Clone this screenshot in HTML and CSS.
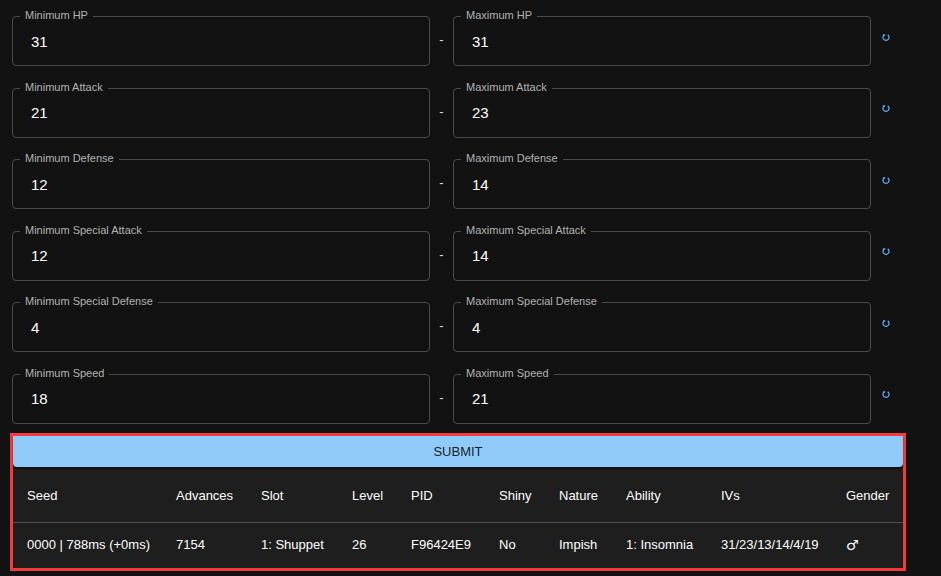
FILE: index.html
```html
<!DOCTYPE html>
<html>
<head>
<meta charset="utf-8">
<link rel="stylesheet" href="styles.css">
</head>
<body>
<div class="page">
  <div class="rows">
    <div class="row">
      <div class="field"><span class="label">Minimum HP</span><span class="value">31</span></div>
      <div class="dash">-</div>
      <div class="field"><span class="label">Maximum HP</span><span class="value">31</span></div>
      <div class="reset"><svg viewBox="0 0 8 8" width="8" height="8"><path d="M5.7 1.9 A3 3 0 1 1 2.3 1.9" fill="none" stroke="#5ea6e8" stroke-width="1.3"/><path d="M0.9 0.9 L3.7 1.4 L2.2 3.3 Z" fill="#5ea6e8"/></svg></div>
    </div>
    <div class="row">
      <div class="field"><span class="label">Minimum Attack</span><span class="value">21</span></div>
      <div class="dash">-</div>
      <div class="field"><span class="label">Maximum Attack</span><span class="value">23</span></div>
      <div class="reset"><svg viewBox="0 0 8 8" width="8" height="8"><path d="M5.7 1.9 A3 3 0 1 1 2.3 1.9" fill="none" stroke="#5ea6e8" stroke-width="1.3"/><path d="M0.9 0.9 L3.7 1.4 L2.2 3.3 Z" fill="#5ea6e8"/></svg></div>
    </div>
    <div class="row">
      <div class="field"><span class="label">Minimum Defense</span><span class="value">12</span></div>
      <div class="dash">-</div>
      <div class="field"><span class="label">Maximum Defense</span><span class="value">14</span></div>
      <div class="reset"><svg viewBox="0 0 8 8" width="8" height="8"><path d="M5.7 1.9 A3 3 0 1 1 2.3 1.9" fill="none" stroke="#5ea6e8" stroke-width="1.3"/><path d="M0.9 0.9 L3.7 1.4 L2.2 3.3 Z" fill="#5ea6e8"/></svg></div>
    </div>
    <div class="row">
      <div class="field"><span class="label">Minimum Special Attack</span><span class="value">12</span></div>
      <div class="dash">-</div>
      <div class="field"><span class="label">Maximum Special Attack</span><span class="value">14</span></div>
      <div class="reset"><svg viewBox="0 0 8 8" width="8" height="8"><path d="M5.7 1.9 A3 3 0 1 1 2.3 1.9" fill="none" stroke="#5ea6e8" stroke-width="1.3"/><path d="M0.9 0.9 L3.7 1.4 L2.2 3.3 Z" fill="#5ea6e8"/></svg></div>
    </div>
    <div class="row">
      <div class="field"><span class="label">Minimum Special Defense</span><span class="value">4</span></div>
      <div class="dash">-</div>
      <div class="field"><span class="label">Maximum Special Defense</span><span class="value">4</span></div>
      <div class="reset"><svg viewBox="0 0 8 8" width="8" height="8"><path d="M5.7 1.9 A3 3 0 1 1 2.3 1.9" fill="none" stroke="#5ea6e8" stroke-width="1.3"/><path d="M0.9 0.9 L3.7 1.4 L2.2 3.3 Z" fill="#5ea6e8"/></svg></div>
    </div>
    <div class="row">
      <div class="field"><span class="label">Minimum Speed</span><span class="value">18</span></div>
      <div class="dash">-</div>
      <div class="field"><span class="label">Maximum Speed</span><span class="value">21</span></div>
      <div class="reset"><svg viewBox="0 0 8 8" width="8" height="8"><path d="M5.7 1.9 A3 3 0 1 1 2.3 1.9" fill="none" stroke="#5ea6e8" stroke-width="1.3"/><path d="M0.9 0.9 L3.7 1.4 L2.2 3.3 Z" fill="#5ea6e8"/></svg></div>
    </div>
  </div>

  <div class="frame">
    <button class="submit">SUBMIT</button>
    <table class="results">
      <colgroup>
        <col style="width:149px"><col style="width:85px"><col style="width:91px"><col style="width:59px"><col style="width:88px">
        <col style="width:60px"><col style="width:67px"><col style="width:95px"><col style="width:125px"><col style="width:71px">
      </colgroup>
      <thead>
        <tr><th>Seed</th><th>Advances</th><th>Slot</th><th>Level</th><th>PID</th><th>Shiny</th><th>Nature</th><th>Ability</th><th>IVs</th><th>Gender</th></tr>
      </thead>
      <tbody>
        <tr><td>0000 | 788ms (+0ms)</td><td>7154</td><td>1: Shuppet</td><td>26</td><td>F96424E9</td><td>No</td><td>Impish</td><td>1: Insomnia</td><td>31/23/13/14/4/19</td><td class="gender">♂</td></tr>
      </tbody>
    </table>
  </div>
</div>
</body>
</html>
```

FILE: styles.css
```css
html, body {
  margin: 0;
  padding: 0;
  background: #121212;
  overflow: hidden;
}
body {
  font-family: "Liberation Sans", Arial, sans-serif;
  color: #fff;
}
.page {
  padding: 16px 0 0 10px;
}
.rows {
  display: flex;
  flex-direction: column;
  gap: 21.6px;
  padding-left: 2px;
}
.row {
  display: flex;
  align-items: center;
}
.field {
  position: relative;
  box-sizing: border-box;
  flex: 0 0 418px;
  width: 418px;
  height: 50px;
  border: 1px solid #4b4b4b;
  border-radius: 4px;
  display: flex;
  align-items: center;
  padding-left: 18px;
}
.label {
  position: absolute;
  left: 7px;
  top: -9px;
  padding: 0 5px;
  background: #121212;
  font-size: 11px;
  line-height: 14px;
  color: #b3b3b3;
}
.value {
  font-size: 15px;
  color: #fff;
}
.dash {
  flex: 0 0 23px;
  text-align: center;
  font-size: 13px;
  color: #ddd;
  padding-bottom: 3px;
}
.reset {
  flex: 0 0 8px;
  height: 8px;
  margin-left: 11px;
  margin-bottom: 9px;
  display: flex;
}
.frame {
  margin-top: 9px;
  width: 890px;
  border: 3px solid #f43b3b;
  background: #1e1e1e;
}
.submit {
  display: block;
  width: 100%;
  height: 31px;
  border: none;
  border-radius: 0 0 4px 4px;
  background: #90caf9;
  color: rgba(0,0,0,0.87);
  font-family: "Liberation Sans", Arial, sans-serif;
  font-size: 13px;
  padding: 0;
  box-shadow: 0 2px 2px rgba(0,0,0,0.5);
  position: relative;
}
.results {
  width: 890px;
  table-layout: fixed;
  border-collapse: collapse;
  font-size: 13px;
}
.results th, .results td {
  text-align: left;
  padding: 0 0 0 14px;
  white-space: nowrap;
  overflow: hidden;
  color: #fff;
}
.results th {
  font-weight: normal;
  height: 52px;
  border-bottom: 1px solid #4f4f4f;
  padding-top: 3px;
}
.results td {
  height: 44px;
  padding-bottom: 1px;
}
.results td.gender {
  font-family: "DejaVu Sans", sans-serif;
  font-size: 14px;
}
```
